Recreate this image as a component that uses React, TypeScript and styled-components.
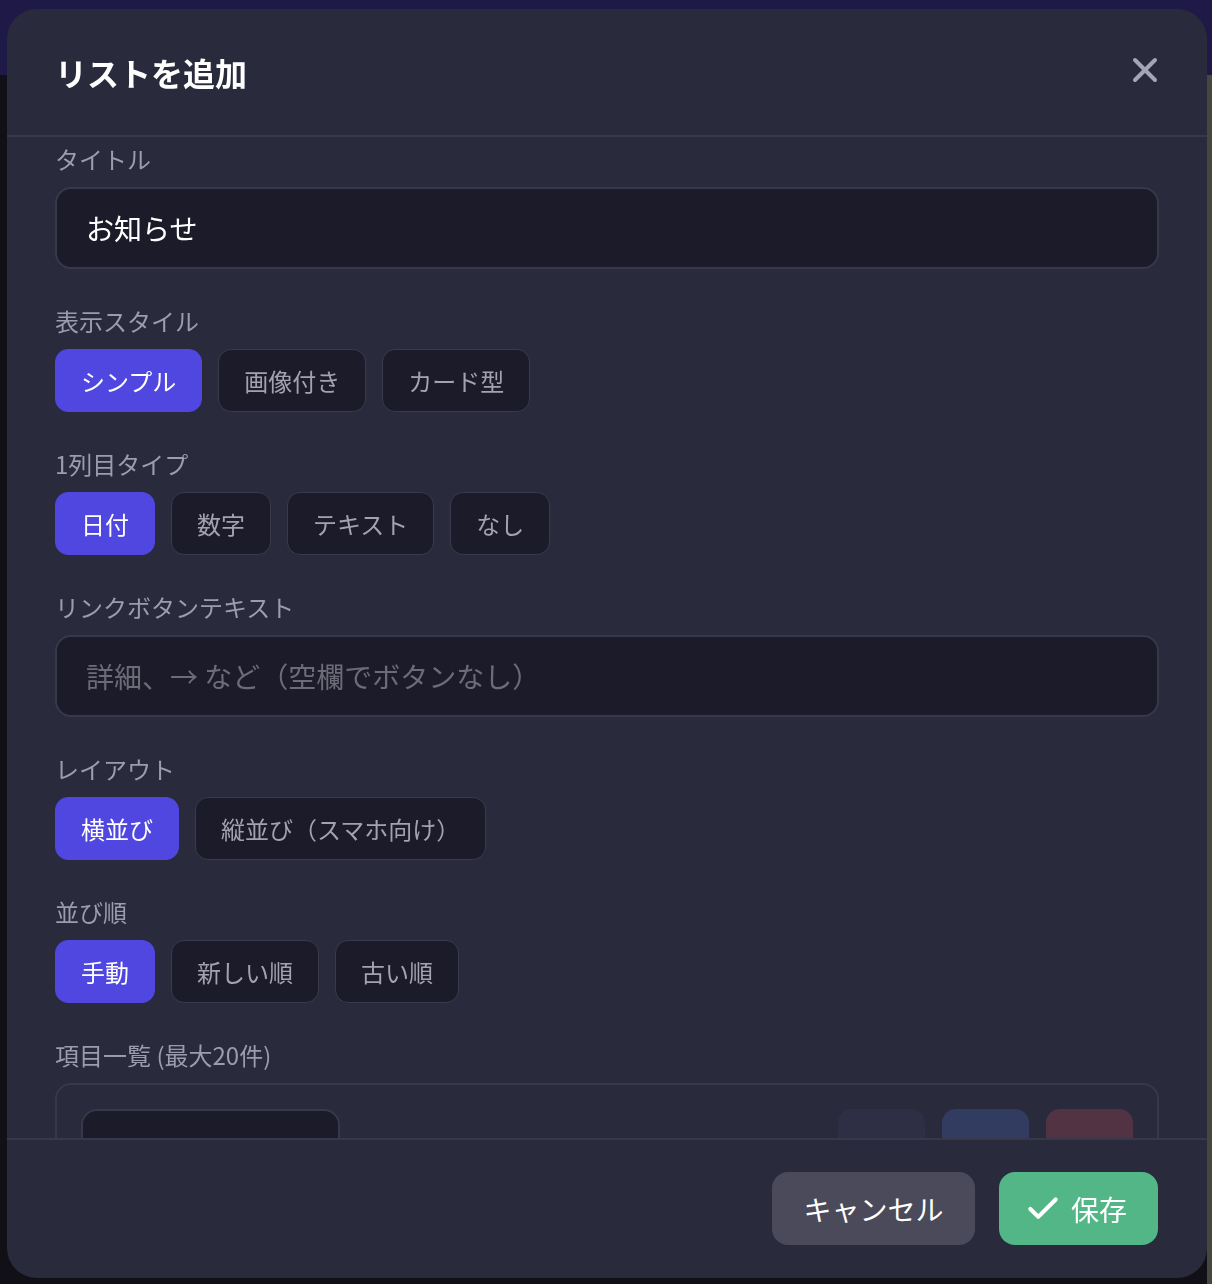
import styled, { createGlobalStyle } from "styled-components";
import { ChevronUp, ChevronDown, Trash2 } from "lucide-react";

const GlobalStyle = createGlobalStyle`
  html, body {
    margin: 0;
    padding: 0;
    background: #111016;
    font-family: "Noto Sans CJK JP", "Noto Sans", sans-serif;
  }
  * { box-sizing: border-box; }
`;

const Page = styled.div`
  width: 1212px;
  height: 1284px;
  display: flex;
  flex-direction: column;
  overflow: hidden;
`;

const TopBar = styled.div`
  height: 75px;
  background: #1f1948;
`;

const Main = styled.div`
  flex: 1;
  display: flex;
  justify-content: flex-end;
  background: #111016;
`;

const ScrollStrip = styled.div`
  width: 5px;
  background: #47463f;
`;

const Overlay = styled.div`
  position: fixed;
  inset: 0;
  display: flex;
  justify-content: flex-start;
  align-items: flex-start;
  padding: 9px 0 0 7px;
`;

const Modal = styled.div`
  width: 1200px;
  height: 1269px;
  background: #292a3c;
  border-radius: 30px;
  display: flex;
  flex-direction: column;
  overflow: hidden;
`;

const Header = styled.div`
  height: 128px;
  padding: 0 48px;
  display: flex;
  align-items: center;
  justify-content: space-between;
  border-bottom: 2px solid #37384a;
  flex-shrink: 0;
`;

const Title = styled.h2`
  margin: 0;
  font-size: 32px;
  font-weight: 700;
  color: #ffffff;
`;

const CloseButton = styled.button`
  background: none;
  border: none;
  padding: 0;
  margin-right: 1px;
  margin-top: -4px;
  width: 26px;
  height: 26px;
  display: flex;
  cursor: pointer;
`;

const Body = styled.div`
  flex: 1;
  overflow: hidden;
  padding: 6px 48px 0;
  display: flex;
  flex-direction: column;
  gap: 36px;
`;

const Field = styled.div`
  display: flex;
  flex-direction: column;
`;

const Label = styled.div`
  font-size: 24px;
  line-height: 32px;
  color: #9d9cab;
  margin-bottom: 12px;
`;

const TextInput = styled.input`
  height: 82px;
  width: 100%;
  background: #1c1b29;
  border: 2px solid #38384b;
  border-radius: 16px;
  padding: 0 29px;
  font-family: inherit;
  font-size: 28px;
  color: #ffffff;
  outline: none;

  &::placeholder {
    color: #6c6b78;
  }
`;

const ChipRow = styled.div`
  display: flex;
  gap: 16px;
`;

const Chip = styled.button<{ $active?: boolean }>`
  height: 63px;
  padding: 0 25px;
  border-radius: 13px;
  border: 1.5px solid ${(p) => (p.$active ? "#4f47df" : "#3a3a4d")};
  background: ${(p) => (p.$active ? "#4f47df" : "#1c1b29")};
  color: ${(p) => (p.$active ? "#ffffff" : "#a3a2b0")};
  font-family: inherit;
  font-size: 24px;
  white-space: nowrap;
  cursor: pointer;
`;

const ItemsBox = styled.div`
  border: 2px solid #38384b;
  border-radius: 16px;
  padding: 24px;
  display: flex;
  flex-direction: column;
  gap: 16px;
`;

const ItemRow = styled.div`
  display: flex;
  align-items: flex-start;
  gap: 17px;
`;

const ItemInput = styled.div`
  width: 259px;
  height: 82px;
  background: #1c1b29;
  border: 2px solid #38384b;
  border-radius: 16px;
  margin-right: auto;
`;

const IconButton = styled.button<{ $tone: "neutral" | "blue" | "red" }>`
  width: 87px;
  height: 87px;
  border: none;
  border-radius: 14px;
  background: ${(p) =>
    p.$tone === "blue" ? "#323b60" : p.$tone === "red" ? "#523343" : "#2e2f45"};
  color: ${(p) =>
    p.$tone === "blue" ? "#8ea2f0" : p.$tone === "red" ? "#f08a9a" : "#a3a2b0"};
  display: flex;
  align-items: center;
  justify-content: center;
  padding-top: 20px;
  cursor: pointer;
`;

const Footer = styled.div`
  flex-shrink: 0;
  border-top: 2px solid #37384a;
  padding: 32px 49px 33px;
  display: flex;
  justify-content: flex-end;
  gap: 24px;
`;

const FooterButton = styled.button<{ $primary?: boolean }>`
  height: 73px;
  border: none;
  border-radius: 16px;
  padding: ${(p) => (p.$primary ? "0 31px 0 25px" : "0 31.5px")};
  background: ${(p) => (p.$primary ? "#53b686" : "#4b4a5a")};
  color: #ffffff;
  font-family: inherit;
  font-size: 28px;
  display: flex;
  align-items: center;
  gap: 9px;
  cursor: pointer;
`;

const styleOptions = ["シンプル", "画像付き", "カード型"];
const columnOptions = ["日付", "数字", "テキスト", "なし"];
const layoutOptions = ["横並び", "縦並び（スマホ向け）"];
const orderOptions = ["手動", "新しい順", "古い順"];

const ChipGroup = ({ options, active }: { options: string[]; active: number }) => (
  <ChipRow>
    {options.map((o, i) => (
      <Chip key={o} $active={i === active}>
        {o}
      </Chip>
    ))}
  </ChipRow>
);

export default function App() {
  return (
    <>
      <GlobalStyle />
      <Page>
        <TopBar />
        <Main>
          <ScrollStrip />
        </Main>
      </Page>
      <Overlay>
        <Modal>
          <Header>
            <Title>リストを追加</Title>
            <CloseButton aria-label="閉じる">
              <svg width="26" height="26" viewBox="0 0 26 26">
                <path
                  d="M3 3 L23 23 M23 3 L3 23"
                  stroke="#a6a5b5"
                  strokeWidth="4"
                  strokeLinecap="round"
                />
              </svg>
            </CloseButton>
          </Header>
          <Body>
            <Field>
              <Label>タイトル</Label>
              <TextInput defaultValue="お知らせ" />
            </Field>
            <Field>
              <Label>表示スタイル</Label>
              <ChipGroup options={styleOptions} active={0} />
            </Field>
            <Field>
              <Label>1列目タイプ</Label>
              <ChipGroup options={columnOptions} active={0} />
            </Field>
            <Field>
              <Label>リンクボタンテキスト</Label>
              <TextInput placeholder="詳細、→ など（空欄でボタンなし）" />
            </Field>
            <Field>
              <Label>レイアウト</Label>
              <ChipGroup options={layoutOptions} active={0} />
            </Field>
            <Field>
              <Label>並び順</Label>
              <ChipGroup options={orderOptions} active={0} />
            </Field>
            <Field>
              <Label>項目一覧 (最大20件)</Label>
              <ItemsBox>
                <ItemRow>
                  <ItemInput />
                  <IconButton $tone="neutral">
                    <ChevronUp size={24} />
                  </IconButton>
                  <IconButton $tone="blue">
                    <ChevronDown size={24} />
                  </IconButton>
                  <IconButton $tone="red">
                    <Trash2 size={24} />
                  </IconButton>
                </ItemRow>
              </ItemsBox>
            </Field>
          </Body>
          <Footer>
            <FooterButton>キャンセル</FooterButton>
            <FooterButton $primary>
              <svg width="38" height="38" viewBox="0 0 24 24" fill="none">
                <path
                  d="M20 6 9 17l-5-5"
                  stroke="#ffffff"
                  strokeWidth="2.6"
                  strokeLinecap="round"
                  strokeLinejoin="round"
                />
              </svg>
              保存
            </FooterButton>
          </Footer>
        </Modal>
      </Overlay>
    </>
  );
}
